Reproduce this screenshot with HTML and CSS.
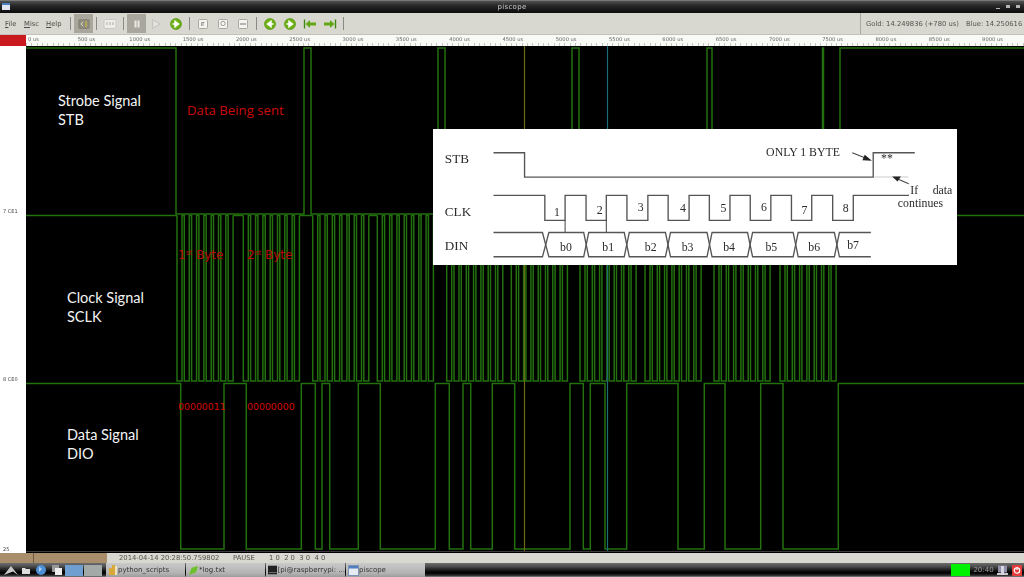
FILE: index.html
```html
<!DOCTYPE html>
<html lang="en">
<head>
<meta charset="utf-8">
<title>piscope</title>
<link rel="stylesheet" href="styles.css">
</head>
<body>
<svg class="defs" width="0" height="0" aria-hidden="true">
  <defs>
    <g id="go"><circle cx="8" cy="8" r="5.5" fill="#6cb112" stroke="#4e8c0a" stroke-width=".6"/><path d="M4.5 8h4M7 5.2 10.6 8 7 10.8z" fill="#fff" stroke="#fff" stroke-width="1.4"/></g>
    <g id="back"><circle cx="8" cy="8" r="5.5" fill="#6cb112" stroke="#4e8c0a" stroke-width=".6"/><path d="M11.5 8h-4M9 5.2 5.4 8 9 10.8z" fill="#fff" stroke="#fff" stroke-width="1.4"/></g>
    <g id="doc"><rect x="3.5" y="3.5" width="9" height="9" rx="1.2" fill="#f4f4f0" stroke="#a8a8a0"/></g>
    <path id="byte" d="M0 215.5v165.5h5v-165.5h2.3v165.5h5v-165.5h2.3v165.5h5v-165.5h2.3v165.5h5v-165.5h2.3v165.5h5v-165.5h2.3v165.5h5v-165.5h2.3v165.5h5v-165.5h2.3v165.5h5v-165.5"/>
  </defs>
</svg>
<div class="app">
  <header class="titlebar">
    <svg class="win-icon" viewBox="0 0 8 7" width="8" height="7"><rect width="8" height="7" fill="#dfe6f2"/><rect width="8" height="2" fill="#4d7fc0"/></svg>
    <span class="title">piscope</span>
    <span class="win-btns"><i class="wb wb-min"></i><i class="wb wb-max"></i><i class="wb wb-close"></i></span>
  </header>

  <div class="toolbar">
    <nav class="menu">
      <span class="mi mi-file"><u>F</u>ile</span>
      <span class="mi mi-misc"><u>M</u>isc</span>
      <span class="mi mi-help"><u>H</u>elp</span>
    </nav>
    <i class="sep"></i>
    <span class="tool pressed"><svg viewBox="0 0 16 16" width="14" height="14"><rect x="2" y="3" width="12" height="10" rx="1" fill="#8d8b7e" stroke="#77756a" stroke-width=".7"/><path d="M7 5.5 4.5 8 7 10.500" fill="none" stroke="#f2efc0" stroke-width="1"/><path d="M9.500 5h2v1.500h-2zM9.500 7.300h2v1.500h-2zM9.500 9.600h2v1.500h-2z" fill="#d8bf3e"/></svg></span>
    <i class="sep"></i>
    <span class="tool"><svg viewBox="0 0 16 16" width="16" height="16"><rect x="2" y="3.500" width="12" height="9" rx="1.500" fill="#eeeee8" stroke="#c9c9c1"/><path d="M5 6v3M8 6v3M11 6v3" stroke="#bcbcb4" stroke-width="1.300"/></svg></span>
    <i class="sep"></i>
    <span class="tool pressed"><svg viewBox="0 0 16 16" width="16" height="16"><path d="M5.500 4.500h2v7h-2zM8.500 4.500h2v7h-2z" fill="#e9e8e2"/></svg></span>
    <span class="tool"><svg viewBox="0 0 16 16" width="16" height="16"><path d="M4.500 3.500 12 8l-7.500 4.500z" fill="#e2e2dc" stroke="#bdbdb5" stroke-width=".8"/></svg></span>
    <span class="tool"><svg viewBox="0 0 16 16" width="16" height="16"><use href="#go"/></svg></span>
    <i class="sep"></i>
    <span class="tool"><svg viewBox="0 0 16 16" width="16" height="16"><use href="#doc"/><path d="M6.500 10V6.500h3M8 6v4" fill="none" stroke="#8a8a82" stroke-width=".8"/></svg></span>
    <span class="tool"><svg viewBox="0 0 16 16" width="16" height="16"><use href="#doc"/><circle cx="8" cy="7.500" r="2.200" fill="none" stroke="#8a8a82" stroke-width=".8"/></svg></span>
    <span class="tool"><svg viewBox="0 0 16 16" width="16" height="16"><use href="#doc"/><path d="M5 8h6" stroke="#8a8a82" stroke-width="1.200"/></svg></span>
    <i class="sep"></i>
    <span class="tool"><svg viewBox="0 0 16 16" width="16" height="16"><use href="#back"/></svg></span>
    <span class="tool"><svg viewBox="0 0 16 16" width="16" height="16"><use href="#go"/></svg></span>
    <span class="tool"><svg viewBox="0 0 16 16" width="16" height="16"><path d="M2.500 3.500v9" stroke="#3f8a0c" stroke-width="1.400"/><path d="M3.500 8 8 4v2.400h6v3.200H8V12z" fill="#62a814"/></svg></span>
    <span class="tool"><svg viewBox="0 0 16 16" width="16" height="16"><path d="M13.500 3.500v9" stroke="#3f8a0c" stroke-width="1.400"/><path d="M12.500 8 8 4v2.400H2v3.200h6V12z" fill="#62a814"/></svg></span>
    <i class="sep"></i>
    <div class="readout">
      <span>Gold: 14.249836 (+780 us)</span>
      <span>Blue: 14.250616</span>
    </div>
  </div>

  <div class="ruler">
    <div class="ruler-red"></div>
    <div class="ruler-scale">
      <span>0 us</span><span>500 us</span><span>1000 us</span><span>1500 us</span><span>2000 us</span><span>2500 us</span><span>3000 us</span><span>3500 us</span><span>4000 us</span><span>4500 us</span><span>5000 us</span><span>5500 us</span><span>6000 us</span><span>6500 us</span><span>7000 us</span><span>7500 us</span><span>8000 us</span><span>8500 us</span><span>9000 us</span>
    </div>
  </div>

  <main class="main">
    <div class="gutter">
      <span>7 CE1</span>
      <span>8 CE0</span>
      <span>25</span>
    </div>
    <div class="canvas">
      <svg class="wave" viewBox="26 46 998 506" width="998" height="506">
        <g class="trace">
          <path d="M26 48H176V214H304V48H311V214H438V48H445V214H572V48H579V214H707V48H712V214H822.500V48H823.500V214H840V48H1024"/>
          <path d="M26 215.500H177M233 215.500H243.300M299.400 215.500H312.700M368.800 215.500H377.300M433.400 215.500H446.700M502.800 215.500H511.300M567.400 215.500H580M636 215.500H645M701 215.500H714M770 215.500H780M836 215.500H1024"/>
          <use href="#byte" x="177"/><use href="#byte" x="243.300"/><use href="#byte" x="312.700"/><use href="#byte" x="377.300"/><use href="#byte" x="446.700"/><use href="#byte" x="511.300"/><use href="#byte" x="580"/><use href="#byte" x="645"/><use href="#byte" x="714"/><use href="#byte" x="780"/>
          <path d="M26 383.500H180.700V549H224V383.500H246.300V549H301.300V383.500H315.300V549H322V383.500H329.700V549H358.300V383.500H380.300V549H435.300V383.500H449.300V549H463V383.500H470.700V549H492.300V383.500H514.700V549H570V383.500H583.300V549H590.300V383.500H605V549H626.700V383.500H678V549H704.300V383.500H725V549H760.700V383.500H783V549H838.300V383.500H1024"/>
        </g>
        <path class="gold" d="M524.500 46V552"/>
        <path class="blue" d="M607.500 46V552"/>
        <path class="baseline" d="M26 551.500H1024"/>
      </svg>

      <div class="note n-stb">Strobe Signal<br>STB</div>
      <div class="note n-clk">Clock Signal<br>SCLK</div>
      <div class="note n-dio">Data Signal<br>DIO</div>
      <div class="red n-data">Data Being sent</div>
      <div class="red n-b1">1<sup>st</sup> Byte</div>
      <div class="red n-b2">2<sup>st</sup> Byte</div>
      <div class="red n-v1">00000011</div>
      <div class="red n-v2">00000000</div>

      <svg class="diagram" viewBox="9 12 1551 402" width="524" height="136">
        <g class="ink">
          <path d="M188 82H280V154H1312V82H1435"/>
          <path d="M188 208H340V282H400V208H462V282H522V208H583V282H645V208H705V282H767V208H827V282H888V208H948V282H1009V208H1070V282H1130V208H1192V282H1253V208H1418"/>
          <path class="thin" d="M400 282V318M522 282V318"/>
          <path d="M188 318H333L352 390H455L470 318H575L590 390H697L712 318H820L835 390H940L955 318H1075L1090 390H1197L1212 318H1305"/>
          <path d="M188 390H333L352 318H455L470 390H575L590 318H697L712 390H820L835 318H940L955 390H1075L1090 318H1197L1212 390H1305"/>
          <path class="faint" d="M1316 154H1416"/>
          <path class="thin" d="M1250 82 1300 102M1417 174 1376 156"/>
          <path class="head" d="M1308 106 1280 104 1287 88zM1368 152 1394 152 1384 167z"/>
        </g>
        <g class="serif">
          <text x="44" y="111">STB</text><text x="44" y="270">CLK</text><text x="44" y="370">DIN</text>
        </g>
        <g class="serif small">
          <text x="995" y="92">ONLY 1 BYTE</text><text x="1335" y="108">**</text>
          <text x="1422" y="204">If</text><text x="1488" y="204">data</text><text x="1385" y="243">continues</text>
          <text x="367" y="270">1</text><text x="494" y="262">2</text><text x="615" y="255">3</text><text x="740" y="258">4</text><text x="860" y="257">5</text><text x="980" y="255">6</text><text x="1100" y="264">7</text><text x="1222" y="258">8</text>
          <text x="385" y="372">b0</text><text x="510" y="372">b1</text><text x="636" y="372">b2</text><text x="745" y="372">b3</text><text x="868" y="372">b4</text><text x="993" y="372">b5</text><text x="1120" y="372">b6</text><text x="1235" y="368">b7</text>
        </g>
      </svg>
    </div>
  </main>

  <div class="status">
    <div class="status-brown"><i></i></div>
    <span class="st-date">2014-04-14 20:28:50.759802</span>
    <span class="st-mode">PAUSE</span>
    <span class="st-bits">1 0&nbsp;&nbsp;2 0&nbsp;&nbsp;3 0&nbsp;&nbsp;4 0</span>
  </div>

  <footer class="taskbar">
    <div class="launch">
      <svg viewBox="0 0 16 12" width="16" height="12"><path d="M1 11 8 2l7 9-5-3.500z" fill="#c9c9c9"/></svg>
      <svg viewBox="0 0 10 10" width="10" height="10"><path d="M1 3h3l1 1h4v5H1z" fill="#ddd"/></svg>
      <svg viewBox="0 0 12 12" width="12" height="12"><circle cx="6" cy="6" r="5" fill="#4d8fd6"/><path d="M4 2.500 7 5 4 8z" fill="#a9d0f2"/></svg>
      <svg viewBox="0 0 12 12" width="12" height="12"><rect x="1" y="1" width="7" height="7" fill="#999"/><rect x="4" y="4" width="7" height="7" fill="#eee"/></svg>
    </div>
    <div class="desks"><i class="desk on"></i><i class="desk"></i></div>
    <div class="tasks">
      <span class="task"><svg viewBox="0 0 10 12" width="10" height="12"><path d="M1 11V4h3V1h3v10z" fill="#d9a83a"/><path d="M7 2h2v9H7z" fill="#f0e4c0"/></svg>python_scripts</span>
      <span class="task"><svg viewBox="0 0 12 12" width="11" height="11"><path d="M1 11 4 3l7-2-2 7z" fill="#6cc02c"/></svg>*log.txt</span>
      <span class="task"><svg viewBox="0 0 11 10" width="10" height="10"><rect width="11" height="10" fill="#222"/><rect x="1" y="7.500" width="9" height="1" fill="#777"/></svg>[pi@raspberrypi: ...</span>
      <span class="task"><svg viewBox="0 0 11 11" width="11" height="11"><rect x=".5" y=".5" width="10" height="10" fill="#e6ebf2" stroke="#7c93b5"/><rect x="1" y="1" width="9" height="2.500" fill="#4d7fc0"/></svg>piscope</span>
    </div>
    <div class="tray">
      <i class="cpu"></i>
      <span class="clock">20:40</span>
      <svg viewBox="0 0 11 11" width="11" height="11"><rect x="1" y=".5" width="9" height="7" fill="#8f8fa8"/><rect x="0" y="8" width="11" height="2" fill="#c9c9c9"/><rect x="4" y="1" width="3" height="9" fill="#d6d6e2"/></svg>
      <svg viewBox="0 0 11 12" width="10" height="11"><rect width="11" height="12" rx="1" fill="#e43d3d"/><circle cx="5.500" cy="6" r="3" fill="none" stroke="#fff" stroke-width="1.300"/><path d="M5.500 2.500v3" stroke="#fff" stroke-width="1.300"/></svg>
    </div>
  </footer>
</div>
</body>
</html>
```

FILE: styles.css
```css
* { box-sizing: border-box; }
html, body { margin: 0; padding: 0; background: #000; overflow: hidden; }
.defs { position: absolute; }
.app {
  width: 1024px; height: 577px; display: flex; flex-direction: column;
  font-family: "DejaVu Sans", sans-serif; color: #55554f; overflow: hidden;
}

.titlebar {
  height: 13px; flex: none; position: relative; display: flex; align-items: center; padding-left: 2px;
  background: linear-gradient(#8c8c8c 0, #4a4a4a 12%, #262626 45%, #0c0c0c 100%);
  filter: blur(.3px);
}
.title { position: absolute; left: 0; right: 0; text-align: center; font-size: 7px; font-weight: 500; color: #c9c9c9; letter-spacing: .3px; }
.win-btns { margin-left: auto; margin-right: 4px; display: flex; gap: 6px; align-items: center; }
.wb { width: 4px; height: 3px; display: block; background: #b4b4b4; }
.wb-min { height: 1px; margin-top: 3px; }

.toolbar {
  height: 22px; flex: none; display: flex; align-items: center; background: #d8d8d0;
  border-bottom: 1px solid #c2c2ba; filter: blur(.3px);
}
.menu { width: 67px; display: flex; flex: none; font-size: 6.8px; color: #4c4c46; padding-left: 5px; }
.mi { flex: none; }
.mi-file { width: 19px; }
.mi-misc { width: 22px; }
.sep { width: 1px; height: 13px; background: #8a8a84; flex: none; margin: 0 3px; }
.tool { width: 20px; height: 19px; flex: none; display: flex; align-items: center; justify-content: center; }
.pressed { width: 19px; background: #a8a69d; }
.readout {
  margin-left: auto; width: 164px; height: 100%; display: flex; align-items: center; gap: 7px; padding-left: 5px;
  border-left: 1px solid #a8a89f; font-size: 6.8px; white-space: nowrap;
}

.ruler { height: 11px; flex: none; display: flex; background: #f8faf6; filter: blur(.3px); }
.ruler-red { width: 26px; background: #ca1a20; flex: none; }
.ruler-scale {
  flex: 1; display: flex; font-size: 5.2px; color: #666; line-height: 8px;
  background: repeating-linear-gradient(90deg, #c4c6c0 0 1px, transparent 1px 5.33px) 0 8px / 100% 3px no-repeat;
}
.ruler-scale span { width: 53.3px; flex: none; white-space: nowrap; text-align: center; }
.ruler-scale span:first-child { width: 33.85px; padding-left: 2px; text-align: left; }

.main { height: 507px; flex: none; display: flex; background: #000; }
.gutter {
  width: 26px; height: 507px; flex: none; background: #fff; display: grid;
  grid-template-rows: 169px 168px 170px; font-size: 5px; color: #444; filter: blur(.2px);
}
.gutter span { align-self: end; padding: 0 0 1px 3px; white-space: nowrap; }
.canvas { flex: 1; position: relative; overflow: hidden; }
.wave { display: block; position: absolute; left: 0; top: 0; }
.trace { fill: none; stroke: #23700f; stroke-width: 1.5; }
.trace use { fill: none; }
.gold { stroke: #6c6a12; stroke-width: 1.2; }
.blue { stroke: #1d6a78; stroke-width: 1.2; }
.baseline { stroke: #3c3c3c; stroke-width: 1; }

.note { position: absolute; color: #f4f4f4; font: 14.5px/19px Lato, sans-serif; }
.n-stb { left: 32px; top: 45px; }
.n-clk { left: 41px; top: 242px; }
.n-dio { left: 41px; top: 379px; }
.red { position: absolute; color: #b80606; white-space: nowrap; font-family: "DejaVu Sans", sans-serif; }
.red sup { font-size: .6em; line-height: 0; vertical-align: .5em; }
.n-data { left: 161px; top: 56px; font: 13.2px/16px "Open Sans", sans-serif; color: #cc0a0a; }
.n-b1, .n-b2 { font-size: 12px; line-height: 14px; top: 202px; }
.n-b1 { left: 152px; }
.n-b2 { left: 221px; }
.n-v1, .n-v2 { font-size: 9.4px; line-height: 12px; top: 355px; color: #d80606; }
.n-v1 { left: 152px; }
.n-v2 { left: 221px; }

.diagram { position: absolute; left: 407px; top: 83px; background: #fff; filter: blur(.35px); }
.ink path { fill: none; stroke: #555; stroke-width: 4; }
.ink .thin { stroke-width: 3; stroke: #444; }
.ink .faint { stroke: #ccc; stroke-width: 3; }
.ink .head { fill: #222; stroke: none; }
.serif text { font-family: "Liberation Serif", serif; font-size: 39px; fill: #2a2a2a; }
.serif.small text { font-size: 35px; }

.status {
  height: 10px; flex: none; background: #d8d8d0; display: flex; align-items: center; font-size: 6.8px; color: #55554f;
  white-space: nowrap; filter: blur(.2px);
}
.status-brown { width: 107px; height: 100%; background: #a98e6c; flex: none; }
.status-brown i { display: block; width: 1px; height: 100%; margin-left: 33px; background: #6f5a40; }
.st-date { margin-left: 12px; width: 114px; flex: none; }
.st-mode { width: 36px; flex: none; }

.taskbar {
  height: 14px; flex: none; display: flex; align-items: center; padding-left: 3px;
  background: linear-gradient(#6e6e6e 0, #4c4c4c 25%, #1c1c1c 50%, #000 70%, #2a2a2a 88%, #8a8a8a 100%);
  filter: blur(.25px);
}
.launch { width: 62px; flex: none; display: flex; align-items: center; gap: 4px; }
.launch svg:first-child { margin-right: -2px; }
.desks { display: flex; gap: 1px; flex: none; }
.desk { width: 18px; height: 11px; background: #a2a9a6; display: block; }
.desk.on { background: #6f9fd0; }
.tasks { display: flex; gap: 1px; margin-left: 4px; flex: none; height: 100%; }
.task {
  width: 79px; flex: none; display: flex; align-items: center; gap: 0; padding-left: 2px; font-size: 7px; color: #333;
  white-space: nowrap; overflow: hidden;
  background: linear-gradient(#c9c9c9, #b4b4b4 70%, #9c9c9c);
}
.tray { margin-left: auto; display: flex; align-items: center; padding-right: 2px; }
.cpu { width: 19px; height: 12px; display: block; background: #00f200; }
.clock { width: 27px; text-align: center; font-size: 7px; color: #9a9a9a; }
.tray svg:last-child { margin-left: 4px; }
```
